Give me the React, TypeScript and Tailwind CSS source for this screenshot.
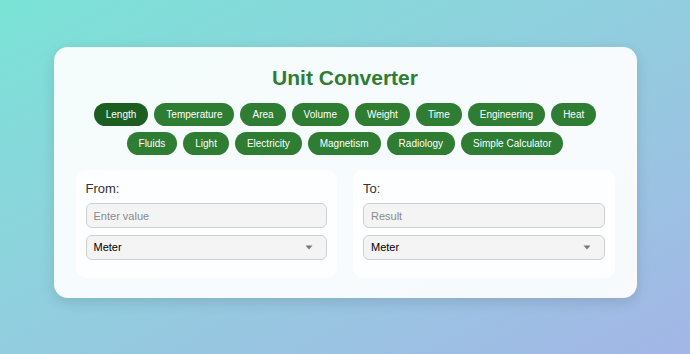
const tabs = [
  ["Length", "Temperature", "Area", "Volume", "Weight", "Time", "Engineering", "Heat"],
  ["Fluids", "Light", "Electricity", "Magnetism", "Radiology", "Simple Calculator"],
];

function Panel({ label, placeholder }: { label: string; placeholder: string }) {
  return (
    <div className="flex-1 rounded-[10px] bg-white/70 px-[10px] pt-[11px] pb-[18px]">
      <div className="mb-[7px] text-[13px] leading-[15px] text-[#333]">{label}</div>
      <input
        placeholder={placeholder}
        className="block h-[25px] w-full rounded-[6px] border border-[#cfcfcf] bg-[#f4f4f4] px-[7px] text-[11px] text-[#333] outline-none placeholder:text-[#8a8a8a]"
      />
      <div className="mt-[7px] flex h-[25px] items-center justify-between rounded-[6px] border border-[#cfcfcf] bg-[#f4f4f4] px-[7px] text-[11px] text-black">
        <span>Meter</span>
        <svg width="8" height="5" viewBox="0 0 8 5" className="mr-[6px]">
          <path d="M0.5 0.5 L7.5 0.5 L4 4.5 Z" fill="#777" />
        </svg>
      </div>
    </div>
  );
}

export default function App() {
  return (
    <div
      className="flex h-[354px] w-full items-start justify-center bg-gradient-to-br from-[#7ae3d6] to-[#a3b6e6] pt-[47px]"
      style={{ fontFamily: '"Liberation Sans", Arial, sans-serif' }}
    >
      <div className="w-[583px] h-[251px] rounded-[14px] bg-white/[0.92] px-[22px] pt-[19px] shadow-[0_4px_14px_rgba(0,0,0,0.12)]">
        <h1 className="text-center text-[21px] font-bold leading-[24px] text-[#2e7d32]">Unit Converter</h1>
        <div className="mt-[13px] flex flex-col gap-[6px]">
          {tabs.map((row, i) => (
            <div key={i} className="flex justify-center gap-[6px]">
              {row.map((t) => (
                <button
                  key={t}
                  className={`h-[23px] rounded-full px-[12px] text-[10px] text-white ${
                    t === "Length" ? "bg-[#1b5e20]" : "bg-[#2e7d32]"
                  }`}
                >
                  {t}
                </button>
              ))}
            </div>
          ))}
        </div>
        <div className="mt-[15px] flex gap-[16px]">
          <Panel label="From:" placeholder="Enter value" />
          <Panel label="To:" placeholder="Result" />
        </div>
      </div>
    </div>
  );
}
